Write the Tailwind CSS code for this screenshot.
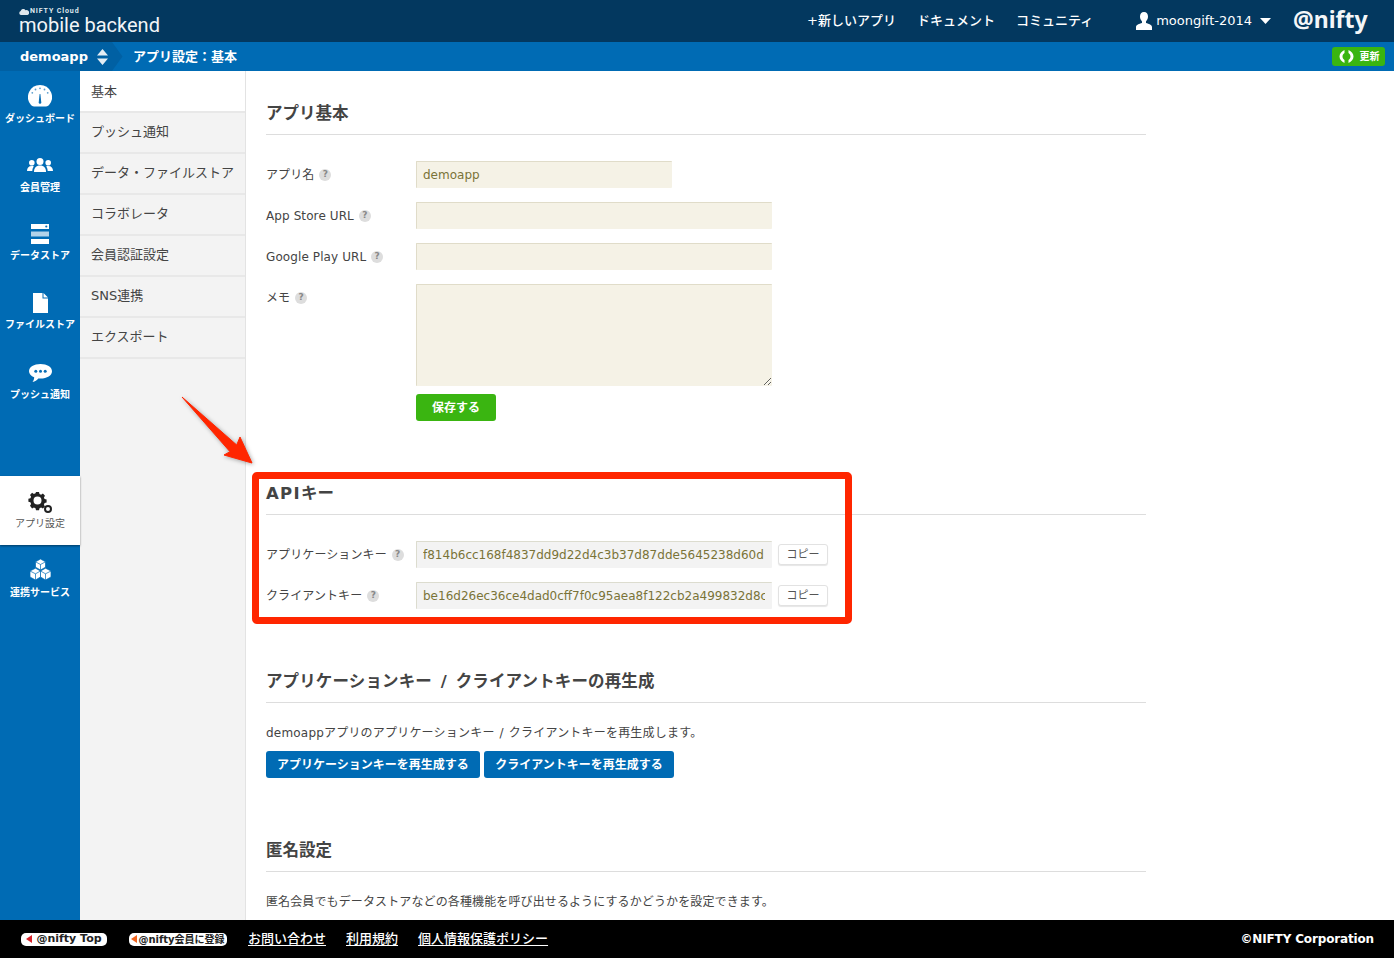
<!DOCTYPE html>
<html lang="ja">
<head>
  <meta charset="UTF-8">
  <title>mobile backend</title>
  <script src="https://cdn.jsdelivr.net/npm/@tailwindcss/browser@4"></script>
</head>
<body class="relative h-[958px] w-[1394px] overflow-hidden bg-white text-[12px] text-[#444] font-['DejaVu_Sans','Noto_Sans_CJK_JP',sans-serif]">

  <!-- top header -->
  <header class="flex h-[42px] items-center bg-[#03385f] text-white">
    <div class="ml-[19px] w-[160px] pt-[2px]">
      <div class="flex h-[7px] items-center gap-[1px] font-['Roboto',sans-serif] text-[7px] font-bold tracking-[0.9px] leading-[7px] text-[#dfe7ee]">
        <svg width="10" height="6" viewBox="0 0 10 6"><path d="M2 6a2 2 0 0 1-.3-3.900A2.600 2.600 0 0 1 6.500 1.200 2.400 2.400 0 0 1 8.500 6z" fill="#dfe7ee"/></svg>
        NIFTY Cloud
      </div>
      <div class="font-['Roboto',sans-serif] text-[20px] leading-[21px] text-[#f2f5f7]">mobile backend</div>
    </div>
    <nav class="ml-[628px] flex items-center gap-[21px] text-[13px] font-medium">
      <a>+新しいアプリ</a>
      <a>ドキュメント</a>
      <a>コミュニティ</a>
    </nav>
    <div class="ml-[42px] flex items-center">
      <svg width="18" height="18" viewBox="0 0 18 18"><path d="M9 0c2.600 0 4 2 4 4.600 0 2-.8 3.700-2 4.800v1.600c2.800.8 6 1.700 6 4V18H1v-3c0-2.300 3.200-3.200 6-4V9.400C5.800 8.300 5 6.600 5 4.600 5 2 6.400 0 9 0z" fill="#fff"/></svg>
      <span class="ml-[3px] text-[13px] font-medium">moongift-2014</span>
      <svg class="ml-[8px]" width="11" height="6" viewBox="0 0 11 6"><path d="M0 0h11L5.500 6z" fill="#fff"/></svg>
    </div>
    <div class="ml-[22px] -mt-[4px] font-['Noto_Sans',sans-serif] text-[23px] font-bold leading-[30px] text-[#f4f6f8]">@nifty</div>
  </header>

  <!-- breadcrumb bar -->
  <div class="flex h-[29px] items-center bg-[#006bb4] text-white">
    <div class="relative flex h-full w-[112px] items-center bg-[#0060a3] pl-[20px] text-[13px] font-bold">
      demoapp
      <svg class="ml-[9px]" width="11" height="16" viewBox="0 0 11 16"><path d="M5.500 0 11 6.500H0zM5.500 16 0 9.500h11z" fill="#e4edf4"/></svg>
      <svg class="absolute left-[112px] top-0" width="11" height="29" viewBox="0 0 11 29"><path d="M0 0 10.500 14.500 0 29z" fill="#0060a3"/></svg>
    </div>
    <div class="ml-[21px] text-[13px] font-bold">アプリ設定：基本</div>
    <button class="ml-auto mr-[9px] flex h-[19px] w-[53px] items-center justify-center gap-[5px] rounded-[3px] bg-[#3ab511] text-[10px] font-bold text-white">
      <svg width="17" height="13" viewBox="0 0 17 13"><path d="M6.500 0C3.500 1.500 1.500 3.800 1.500 6.500S3.500 11.500 6.500 13V10C5.200 9.200 4.500 8 4.500 6.500S5.200 3.800 6.500 3zM10.500 0c3 1.500 5 3.800 5 6.500s-2 5-5 6.500V10c1.300-.8 2-2 2-3.500s-.7-2.700-2-3.500z" fill="#fff"/></svg>
      更新
    </button>
  </div>

  <div class="flex h-[849px] overflow-hidden">
    <!-- icon sidebar -->
    <aside class="flex w-[80px] shrink-0 flex-col bg-[#006bb4] text-[10px] font-bold text-white">
      <a class="-mt-px flex h-[69px] flex-col items-center">
        <svg class="mt-[15px]" width="24" height="22" viewBox="0 0 24 22"><path d="M12 0a12 12 0 0 1 9 19.900C20 21 18.500 21.500 16.500 21.500h-9C5.500 21.500 4 21 3 19.900A12 12 0 0 1 12 0z" fill="#fff"/><g fill="#5d9fce"><circle cx="12" cy="3.300" r=".9"/><circle cx="7.500" cy="4.500" r=".9"/><circle cx="16.500" cy="4.500" r=".9"/><circle cx="4.300" cy="7.800" r=".9"/><circle cx="19.700" cy="7.800" r=".9"/></g><path d="M11.600 9h.8l.9 8.500a1.300 1.300 0 1 1-2.600 0z" fill="#0a6fb6"/></svg>
        <span class="mt-[5px] leading-[14px]">ダッシュボード</span>
      </a>
      <a class="flex h-[69px] flex-col items-center">
        <svg class="mt-[19px]" width="26" height="14" viewBox="0 0 26 14"><g fill="#fff"><circle cx="13" cy="3.500" r="3.500"/><path d="M7 14c0-4 2-6.500 6-6.500s6 2.500 6 6.500z"/><circle cx="4.800" cy="4.800" r="2.800"/><path d="M0 13c0-3 1.500-5 4.800-5 .8 0 1.500.1 2 .4C5.800 9.500 5.400 11 5.300 13z"/><circle cx="21.200" cy="4.800" r="2.800"/><path d="M26 13c0-3-1.500-5-4.800-5-.8 0-1.500.1-2 .4 1 1.100 1.400 2.600 1.500 4.600z"/></g></svg>
        <span class="mt-[9px] leading-[14px]">会員管理</span>
      </a>
      <a class="flex h-[69px] flex-col items-center">
        <svg class="mt-[16px]" width="18" height="20" viewBox="0 0 18 20"><g fill="#fff"><path d="M0 0h18v5H0z"/><path d="M0 7.500h18v5H0z" opacity=".7"/><path d="M0 15h18v5H0z"/></g><circle cx="15.300" cy="2.500" r="1.100" fill="#0a6fb6"/></svg>
        <span class="mt-[5px] leading-[14px]">データストア</span>
      </a>
      <a class="flex h-[69px] flex-col items-center">
        <svg class="mt-[16px]" width="15" height="20" viewBox="0 0 15 20"><path d="M0 0h9.500v5.500H15V20H0zM10.500 0 15 4.500h-4.500z" fill="#fff"/></svg>
        <span class="mt-[5px] leading-[14px]">ファイルストア</span>
      </a>
      <a class="flex h-[69px] flex-col items-center">
        <svg class="mt-[18px]" width="23" height="18" viewBox="0 0 23 18"><path d="M11.500 0C18 0 23 3 23 7.200s-5 7.300-11.500 7.300c-.8 0-1.500 0-2.200-.1C8 16 6 17.500 3.500 18c1-1.200 1.600-2.500 1.700-4.700C2 12 0 9.800 0 7.200 0 3 5 0 11.500 0z" fill="#fff"/><g fill="#0a6fb6"><circle cx="6.800" cy="7.300" r="1.500"/><circle cx="11.500" cy="7.300" r="1.500"/><circle cx="16.200" cy="7.300" r="1.500"/></g></svg>
        <span class="mt-[6px] leading-[14px]">プッシュ通知</span>
      </a>
      <a class="z-10 mt-[61px] flex h-[69px] flex-col items-center bg-white font-normal text-[#555] shadow-[0_1px_2px_rgba(0,0,0,0.45)]">
        <svg class="mt-[14px]" width="24" height="24" viewBox="0 0 24 24"><path fill-rule="evenodd" fill="#222" d="M7 2h3l.5 2 1.600.7 1.800-1.100 2.100 2.100-1.100 1.800.7 1.600 2 .5v3l-2 .5-.7 1.600 1.100 1.800-2.100 2.100-1.800-1.100-1.600.7-.5 2H7l-.5-2-1.600-.7-1.800 1.100L1 15.700l1.100-1.800-.7-1.600-2-.5v-3l2-.5.7-1.600L1 4.900 3.100 2.800l1.800 1.100 1.600-.7zM8.500 6.500a4 4 0 1 0 0 8 4 4 0 0 0 0-8z" transform="translate(1)"/><path fill-rule="evenodd" fill="#222" d="M20 15a4 4 0 1 1 0 8 4 4 0 0 1 0-8zm0 2a2 2 0 1 0 0 4 2 2 0 0 0 0-4z"/></svg>
        <span class="mt-[3px] leading-[14px]">アプリ設定</span>
      </a>
      <a class="flex h-[69px] flex-col items-center">
        <svg class="mt-[14px]" width="21" height="21" viewBox="0 0 21 21"><g fill="#fff" stroke="#006bb4" stroke-width=".7" stroke-linejoin="round"><path d="M10.500 0 15.500 2.800v5.400L10.500 11 5.500 8.200V2.800z"/><path d="M5.500 2.800l5 2.700 5-2.700M10.500 5.500V11" fill="none"/><path d="M5.500 9.200l5 2.800v6l-5 3-5.500-3v-6z"/><path d="M0 12l5.500 2.800L10.500 12M5.500 14.800V21" fill="none"/><path d="M15.500 9.200l5.500 2.800v6l-5.500 3-5-3v-6z"/><path d="M10.500 12l5 2.800L21 12M15.500 14.800V21" fill="none"/></g></svg>
        <span class="mt-[6px] leading-[14px]">連携サービス</span>
      </a>
    </aside>

    <!-- sub menu -->
    <nav class="w-[166px] shrink-0 border-r border-[#e3e3e3] bg-[#f3f3f3] text-[13px] text-[#444]">
      <a class="flex h-[40px] items-center bg-white pl-[11px] pt-[1px]">基本</a>
      <a class="flex h-[41px] items-center border-t-2 border-[#e8e8e8] pb-[2px] pl-[11px]">プッシュ通知</a>
      <a class="flex h-[41px] items-center border-t-2 border-[#e8e8e8] pb-[2px] pl-[11px]">データ・ファイルストア</a>
      <a class="flex h-[41px] items-center border-t-2 border-[#e8e8e8] pb-[2px] pl-[11px]">コラボレータ</a>
      <a class="flex h-[41px] items-center border-t-2 border-[#e8e8e8] pb-[2px] pl-[11px]">会員認証設定</a>
      <a class="flex h-[41px] items-center border-t-2 border-[#e8e8e8] pb-[2px] pl-[11px]">SNS連携</a>
      <a class="flex h-[43px] items-center border-y-2 border-[#e8e8e8] pb-[2px] pl-[11px]">エクスポート</a>
    </nav>

    <!-- main content -->
    <main class="ml-[20px] w-[880px] shrink-0">
      <section class="pt-[29px]">
        <h2 class="h-[35px] border-b border-[#ddd] text-[16.500px] font-bold leading-[28px] text-[#444]">アプリ基本</h2>
        <div class="mt-[26px] flex flex-col gap-[14px]">
          <div class="flex h-[27px] items-center">
            <label class="flex w-[150px] items-center gap-[5px] tracking-[0.1px]">アプリ名 <i class="flex size-[12px] items-center justify-center rounded-full bg-[#ddd] text-[9px] font-bold not-italic text-[#888]">?</i></label>
            <input class="h-[27px] w-[256px] rounded-[1px] border-t border-l border-[#e0dcc9] bg-[#f5f2e6] pl-[6px] pr-[7px] text-[12px] text-[#7a7338]" value="demoapp">
          </div>
          <div class="flex h-[27px] items-center">
            <label class="flex w-[150px] items-center gap-[5px] tracking-[0.1px]">App Store URL <i class="flex size-[12px] items-center justify-center rounded-full bg-[#ddd] text-[9px] font-bold not-italic text-[#888]">?</i></label>
            <input class="h-[27px] w-[356px] rounded-[1px] border-t border-l border-[#e0dcc9] bg-[#f5f2e6] pl-[6px] pr-[7px] text-[12px] text-[#7a7338]">
          </div>
          <div class="flex h-[27px] items-center">
            <label class="flex w-[150px] items-center gap-[5px] tracking-[0.1px]">Google Play URL <i class="flex size-[12px] items-center justify-center rounded-full bg-[#ddd] text-[9px] font-bold not-italic text-[#888]">?</i></label>
            <input class="h-[27px] w-[356px] rounded-[1px] border-t border-l border-[#e0dcc9] bg-[#f5f2e6] pl-[6px] pr-[7px] text-[12px] text-[#7a7338]">
          </div>
          <div class="flex items-start">
            <label class="flex h-[27px] w-[150px] items-center gap-[5px] tracking-[0.1px]">メモ <i class="flex size-[12px] items-center justify-center rounded-full bg-[#ddd] text-[9px] font-bold not-italic text-[#888]">?</i></label>
            <textarea class="block h-[102px] w-[356px] rounded-[1px] border-t border-l border-[#e0dcc9] bg-[#f5f2e6]"></textarea>
          </div>
        </div>
        <button class="ml-[150px] mt-[8px] block h-[27px] w-[80px] rounded-[3px] bg-[#3ab511] text-center text-[12px] font-bold text-white">保存する</button>
      </section>

      <section class="mt-[59px]">
        <h2 class="h-[35px] border-b border-[#ddd] text-[16.500px] font-bold leading-[28px] text-[#444]"><span class="tracking-[1.300px]">API</span>キー</h2>
        <div class="mt-[26px] flex flex-col gap-[14px]">
          <div class="flex h-[27px] items-center">
            <label class="flex w-[150px] items-center gap-[5px] tracking-[0.1px]">アプリケーションキー <i class="flex size-[12px] items-center justify-center rounded-full bg-[#ddd] text-[9px] font-bold not-italic text-[#888]">?</i></label>
            <input readonly class="h-[27px] w-[356px] rounded-[1px] border-t border-l border-[#dcdccf] bg-[#f3f3f3] pl-[6px] pr-[7px] text-[12px] text-[#7a7338]" value="f814b6cc168f4837dd9d22d4c3b37d87dde5645238d60d">
            <button class="ml-[6px] h-[21px] w-[50px] rounded-[3px] border border-[#e2e2e2] bg-white pt-[2px] text-[11px] text-[#555] shadow-[0_1px_1px_rgba(0,0,0,0.1)]">コピー</button>
          </div>
          <div class="flex h-[27px] items-center">
            <label class="flex w-[150px] items-center gap-[5px] tracking-[0.1px]">クライアントキー <i class="flex size-[12px] items-center justify-center rounded-full bg-[#ddd] text-[9px] font-bold not-italic text-[#888]">?</i></label>
            <input readonly class="h-[27px] w-[356px] rounded-[1px] border-t border-l border-[#dcdccf] bg-[#f3f3f3] pl-[6px] pr-[7px] text-[12px] text-[#7a7338]" value="be16d26ec36ce4dad0cff7f0c95aea8f122cb2a499832d8c6e">
            <button class="ml-[6px] h-[21px] w-[50px] rounded-[3px] border border-[#e2e2e2] bg-white pt-[2px] text-[11px] text-[#555] shadow-[0_1px_1px_rgba(0,0,0,0.1)]">コピー</button>
          </div>
        </div>
      </section>

      <section class="mt-[59px]">
        <h2 class="h-[35px] border-b border-[#ddd] text-[16.500px] font-bold leading-[28px] tracking-[0.12px] text-[#444] [word-spacing:3px]">アプリケーションキー / クライアントキーの再生成</h2>
        <p class="mt-[21px] leading-[18px] tracking-[0.2px] [word-spacing:1px]">demoappアプリのアプリケーションキー / クライアントキーを再生成します。</p>
        <div class="mt-[9px] flex gap-[4px]">
          <button class="h-[27px] w-[214px] rounded-[3px] bg-[#006bb4] text-[12px] font-bold text-white">アプリケーションキーを再生成する</button>
          <button class="h-[27px] w-[190px] rounded-[3px] bg-[#006bb4] text-[12px] font-bold text-white">クライアントキーを再生成する</button>
        </div>
      </section>

      <section class="mt-[59px]">
        <h2 class="h-[35px] border-b border-[#ddd] text-[16.500px] font-bold leading-[28px] text-[#444]">匿名設定</h2>
        <p class="mt-[21px] leading-[18px] tracking-[0.12px]">匿名会員でもデータストアなどの各種機能を呼び出せるようにするかどうかを設定できます。</p>
      </section>
    </main>
  </div>

  <!-- footer -->
  <footer class="flex h-[38px] items-center bg-black text-[13px] font-medium text-white">
    <a class="ml-[21px] flex h-[13px] w-[86px] items-center justify-center gap-[4px] rounded-[5px] bg-white text-[11px] font-bold text-[#222]">
      <svg width="6" height="8" viewBox="0 0 6 8"><path d="M6 0v8L0 4z" fill="#d8232a"/></svg>@nifty Top
    </a>
    <a class="ml-[22px] flex h-[13px] w-[98px] items-center justify-center gap-[1px] whitespace-nowrap rounded-[5px] bg-white text-[10px] font-bold text-[#222]">
      <svg width="6" height="8" viewBox="0 0 6 8"><path d="M6 0v8L0 4z" fill="#f0641e"/></svg>@nifty会員に登録
    </a>
    <a class="ml-[21px] underline underline-offset-2">お問い合わせ</a>
    <a class="ml-[20px] underline underline-offset-2">利用規約</a>
    <a class="ml-[20px] underline underline-offset-2">個人情報保護ポリシー</a>
    <span class="ml-auto mr-[20px] text-[12px] font-bold tracking-[-0.15px]">©NIFTY Corporation</span>
  </footer>

  <!-- red annotation -->
  <div class="absolute left-[252px] top-[472px] h-[152px] w-[600px] rounded-[5px] border-[7px] border-[#ff2600]"></div>
  <svg class="absolute left-[178px] top-[392px] drop-shadow-[1px_1px_2px_rgba(0,0,0,0.35)]" width="78" height="76" viewBox="0 0 78 76">
    <path d="M4 5 58.700 53 62 45 74 71 46 63 52 59.700z" fill="#ff2600" stroke="#ff2600" stroke-width="1" stroke-linejoin="round"/>
  </svg>
</body>
</html>
